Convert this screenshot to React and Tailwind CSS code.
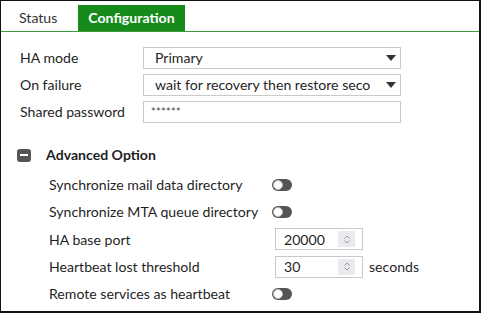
import React from 'react'

const font = { fontFamily: 'Lato, "Open Sans", Arial, sans-serif' }

function Caret() {
  return (
    <svg width="10" height="6" viewBox="0 0 10 6" className="shrink-0">
      <path d="M0 0h10L5 6z" fill="#333" />
    </svg>
  )
}

function Select({ value }) {
  return (
    <div className="w-[258px] h-[22px] border border-[#c9c9c9] flex items-center pl-[11px] pr-[4px] justify-between text-[#1f1f1f]">
      <span className="whitespace-nowrap overflow-hidden">{value}</span>
      <Caret />
    </div>
  )
}

function Toggle() {
  return (
    <div className="w-[20px] h-[12px] rounded-full bg-[#555] relative">
      <div className="absolute left-[1px] top-[1px] w-[10px] h-[10px] rounded-full bg-white border border-[#bbb]" />
    </div>
  )
}

function NumberInput({ value }) {
  return (
    <div className="ml-[3px] w-[88px] h-[22px] border border-[#c9c9c9] flex items-center pl-[8px] pr-[7px] justify-between text-[#1f1f1f]">
      <span>{value}</span>
      <div className="w-[17px] h-[16px] bg-[#e9e9ee] flex flex-col items-center justify-center gap-[1px]">
        <svg width="6" height="4" viewBox="0 0 6 4"><path d="M0.5 3.5L3 1l2.5 2.5" fill="none" stroke="#999" strokeWidth="1" /></svg>
        <svg width="6" height="4" viewBox="0 0 6 4"><path d="M0.5 0.5L3 3l2.5-2.5" fill="none" stroke="#999" strokeWidth="1" /></svg>
      </div>
    </div>
  )
}

export default function App() {
  const rows = [
    { label: 'Synchronize mail data directory', control: <Toggle /> },
    { label: 'Synchronize MTA queue directory', control: <Toggle /> },
    { label: 'HA base port', control: <NumberInput value="20000" /> },
    { label: 'Heartbeat lost threshold', control: <><NumberInput value="30" /><span className="ml-[6px]">seconds</span></> },
    { label: 'Remote services as heartbeat', control: <Toggle /> },
  ]

  return (
    <div style={font} className="w-[481px] h-[313px] bg-white border border-r-2 border-b-2 border-[#111] text-[14.1px] text-[#1f1f1f] overflow-hidden">
      <div className="h-[31px] flex items-end border-b border-[#3c9a3c]">
        <div className="ml-[18px] h-[26px] flex items-center text-[#333]">Status</div>
        <div className="ml-[21px] h-[26px] px-[10px] flex items-center bg-[#178a1c] text-white font-bold">Configuration</div>
      </div>

      <div className="pt-[15px] pl-[19px] flex flex-col gap-[5px]">
        <div className="flex items-center h-[22px]">
          <span className="w-[123px]">HA mode</span>
          <Select value="Primary" />
        </div>
        <div className="flex items-center h-[22px]">
          <span className="w-[123px]">On failure</span>
          <Select value="wait for recovery then restore seco" />
        </div>
        <div className="flex items-center h-[22px]">
          <span className="w-[123px] whitespace-nowrap">Shared password</span>
          <div className="w-[258px] h-[22px] border border-[#c9c9c9] flex items-center pl-[7px] text-[11px] text-[#444] tracking-[0.3px]">******</div>
        </div>
      </div>

      <div className="mt-[22px] pl-[16px] h-[20px] flex items-center">
        <div className="w-[14px] h-[13px] rounded-[3px] bg-[#555] flex items-center justify-center">
          <div className="w-[8px] h-[2px] bg-white" />
        </div>
        <span className="ml-[15px] font-bold">Advanced Option</span>
      </div>

      <div className="mt-[6px] pl-[48px] flex flex-col">
        {rows.map((r) => (
          <div key={r.label} className="h-[27.3px] flex items-center">
            <span className="w-[223px] whitespace-nowrap">{r.label}</span>
            <div className="flex items-center">{r.control}</div>
          </div>
        ))}
      </div>
    </div>
  )
}
